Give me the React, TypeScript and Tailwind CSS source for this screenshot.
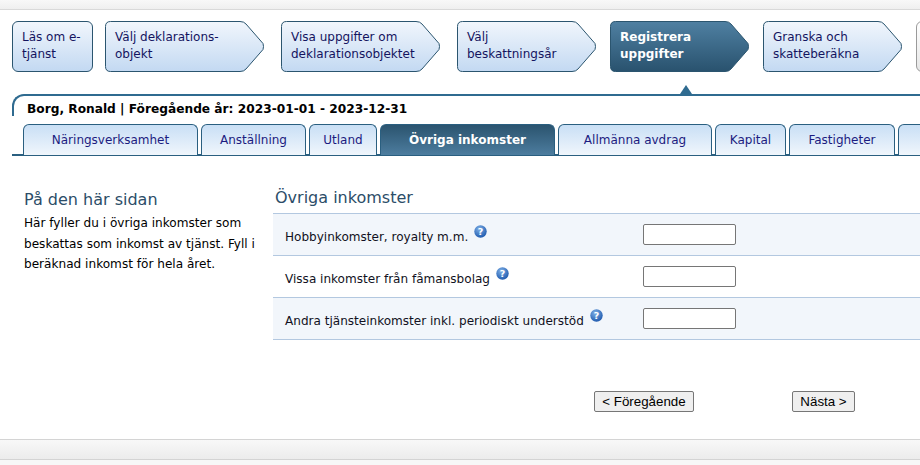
const STEPS = [
  { label: ['Välj deklarations-', 'objekt'], width: 160, gap: 'ml-[12px]', pad: 'pl-[10px]' },
  { label: ['Visa uppgifter om', 'deklarationsobjektet'], width: 160, gap: 'ml-[16px]', pad: 'pl-[10px]' },
  { label: ['Välj', 'beskattningsår'], width: 140, gap: 'ml-[16px]', pad: 'pl-[10px]' },
  { label: ['Registrera', 'uppgifter'], width: 140, gap: 'ml-[13px]', pad: 'pl-[10px]', active: true },
  { label: ['Granska och', 'skatteberäkna'], width: 140, gap: 'ml-[13px]', pad: 'pl-[10px]' },
]

const TABS = [
  { label: 'Näringsverksamhet', width: 'w-[175px]' },
  { label: 'Anställning', width: 'w-[105px]' },
  { label: 'Utland', width: 'w-[68px]' },
  { label: 'Övriga inkomster', width: 'w-[175px]', active: true },
  { label: 'Allmänna avdrag', width: 'w-[154px]' },
  { label: 'Kapital', width: 'w-[71px]' },
  { label: 'Fastigheter', width: 'w-[106px]' },
  { label: '', width: 'w-[60px]' },
]

const ROWS = [
  { label: 'Hobbyinkomster, royalty m.m.', shaded: true },
  { label: 'Vissa inkomster från fåmansbolag', shaded: false },
  { label: 'Andra tjänsteinkomster inkl. periodiskt understöd', shaded: true },
]

function StepArrow({ label, width, gap, pad, active }: { label: string[]; width: number; gap: string; pad: string; active?: boolean }) {
  const tip = width - 1
  const d = `M5.5 .5 H${tip - 24} Q${tip - 20} .5 ${tip - 18} 3 L${tip - 1} 22.5 Q${tip} 25.5 ${tip - 1} 28.5 L${tip - 18} 48 Q${tip - 20} 50.5 ${tip - 24} 50.5 H5.5 Q.5 50.5 .5 45.5 V5.5 Q.5 .5 5.5 .5 Z`
  return (
    <div className={`relative h-[51px] shrink-0 ${gap}`} style={{ width }}>
      <svg className="absolute inset-0" width={width} height={51}>
        <path d={d} fill={active ? 'url(#stepDark)' : 'url(#stepLight)'} stroke="#2b556f" />
      </svg>
      <div className={`relative pt-[8px] text-[12px] leading-[17px] whitespace-nowrap ${pad} ${active ? 'font-bold text-white' : 'text-[#14145f]'}`}>
        {label.map((line) => (
          <div key={line}>{line}</div>
        ))}
      </div>
    </div>
  )
}

function HelpIcon() {
  return (
    <svg width="13" height="13" viewBox="0 0 13 13" className="shrink-0">
      <circle cx="6.5" cy="6.5" r="6.2" fill="url(#helpBlue)" />
      <text x="6.5" y="10" textAnchor="middle" fontSize="9.5" fontWeight="700" fill="#fff" fontFamily="'DejaVu Sans', sans-serif">?</text>
    </svg>
  )
}

export default function App() {
  return (
    <div className="flex h-[465px] w-[920px] flex-col overflow-hidden bg-white font-['DejaVu_Sans',sans-serif]">
      <svg width="0" height="0" className="absolute">
        <defs>
          <linearGradient id="stepLight" x1="0" y1="0" x2="0" y2="1">
            <stop offset="0" stopColor="#f1f6fc" />
            <stop offset="1" stopColor="#c3d9f2" />
          </linearGradient>
          <linearGradient id="stepDark" x1="0" y1="0" x2="0" y2="1">
            <stop offset="0" stopColor="#4f80a2" />
            <stop offset="1" stopColor="#29526e" />
          </linearGradient>
          <radialGradient id="helpBlue" cx="0.4" cy="0.3" r="0.8">
            <stop offset="0" stopColor="#7fb0e6" />
            <stop offset="1" stopColor="#1450a8" />
          </radialGradient>
        </defs>
      </svg>

      <div className="h-[10px] shrink-0 border-b border-[#d9d9d9] bg-gradient-to-b from-[#f8f8f8] to-[#efefef]" />

      <div className="ml-[12px] mt-[11px] flex shrink-0">
        <div className="h-[51px] w-[81px] shrink-0 rounded-[6px] border border-[#2b556f] bg-gradient-to-b from-[#f1f6fc] to-[#c3d9f2] pl-[9px] pt-[7px] text-[12px] leading-[17px] text-[#14145f]">
          <div>Läs om e-</div>
          <div>tjänst</div>
        </div>
        {STEPS.map((step) => (
          <StepArrow key={step.label[0]} {...step} />
        ))}
        <div className="ml-[13px] h-[51px] w-[20px] shrink-0 rounded-l-[6px] border border-[#9a9a9a] bg-gradient-to-b from-[#ffffff] to-[#e6e6e6]" />
      </div>

      <div className="relative ml-[12px] mt-[22px] h-[22px] shrink-0 rounded-tl-[12px] border-l-2 border-t-2 border-[#2f6b90] pl-[13px] pt-[5px] text-[12.2px] font-bold leading-[17px] text-black">
        Borg, Ronald | Föregående år: 2023-01-01 - 2023-12-31
        <div className="absolute left-[666px] top-[-11px] h-0 w-0 border-x-[6px] border-b-[9px] border-x-transparent border-b-[#2f6b90]" />
      </div>

      <div className="ml-[12px] mt-[8px] flex h-[32px] shrink-0 gap-[3px] border-b-2 border-[#2a5f80] pl-[11px]">
        {TABS.map((tab, i) => (
          <div
            key={i}
            className={`${tab.width} flex h-[31px] shrink-0 items-center justify-center rounded-t-[6px] border-x border-t border-[#2a5f80] text-[12px] ${
              tab.active
                ? 'bg-gradient-to-b from-[#2b546f] to-[#4d7d9f] font-bold text-white'
                : 'bg-gradient-to-b from-[#c9dff5] to-[#f0f6fc] text-[#1c1c80]'
            }`}
          >
            {tab.label}
          </div>
        ))}
      </div>

      <div className="flex shrink-0">
        <div className="ml-[24px] mt-[34px] w-[249px] shrink-0 pr-[10px]">
          <h2 className="text-[16px] leading-[20px] text-[#2c4d68]">På den här sidan</h2>
          <p className="mt-[3px] whitespace-nowrap text-[12.1px] leading-[20.5px] text-black">
            Här fyller du i övriga inkomster som
            <br />
            beskattas som inkomst av tjänst. Fyll i
            <br />
            beräknad inkomst för hela året.
          </p>
        </div>
        <div className="mt-[32px] flex-1">
          <h2 className="pl-[2px] text-[16px] leading-[20px] text-[#2c4d68]">Övriga inkomster</h2>
          <div className="mt-[5px] border-t border-[#b3c8e0]">
            {ROWS.map((row) => (
              <div
                key={row.label}
                className={`flex h-[42px] items-center border-b border-[#b3c8e0] ${row.shaded ? 'bg-[#f2f6fb]' : 'bg-white'}`}
              >
                <div className="flex w-[370px] shrink-0 items-start pl-[12px]">
                  <span className="mt-[4px] whitespace-nowrap text-[12.05px] leading-[16px] text-[#111122]">{row.label}</span>
                  <span className="ml-[6px]">
                    <HelpIcon />
                  </span>
                </div>
                <input
                  type="text"
                  aria-label={row.label}
                  className="h-[21px] w-[93px] rounded-[2px] border border-[#767676] bg-white"
                />
              </div>
            ))}
          </div>
        </div>
      </div>

      <div className="ml-[594px] mt-[51px] flex shrink-0 gap-[98px] font-['Liberation_Sans',sans-serif] text-[13.33px] text-black">
        <button className="h-[21px] w-[100px] rounded-[2px] border border-[#767676] bg-[#efefef]">&lt; Föregående</button>
        <button className="h-[21px] w-[63px] rounded-[2px] border border-[#767676] bg-[#efefef]">Nästa &gt;</button>
      </div>

      <div className="mt-[27px] h-[21px] shrink-0 border-y border-[#d4d4d4] bg-gradient-to-b from-[#f8f8f8] to-[#ececec]" />
      <div className="flex-1 bg-[#f7f7f7]" />
    </div>
  )
}
